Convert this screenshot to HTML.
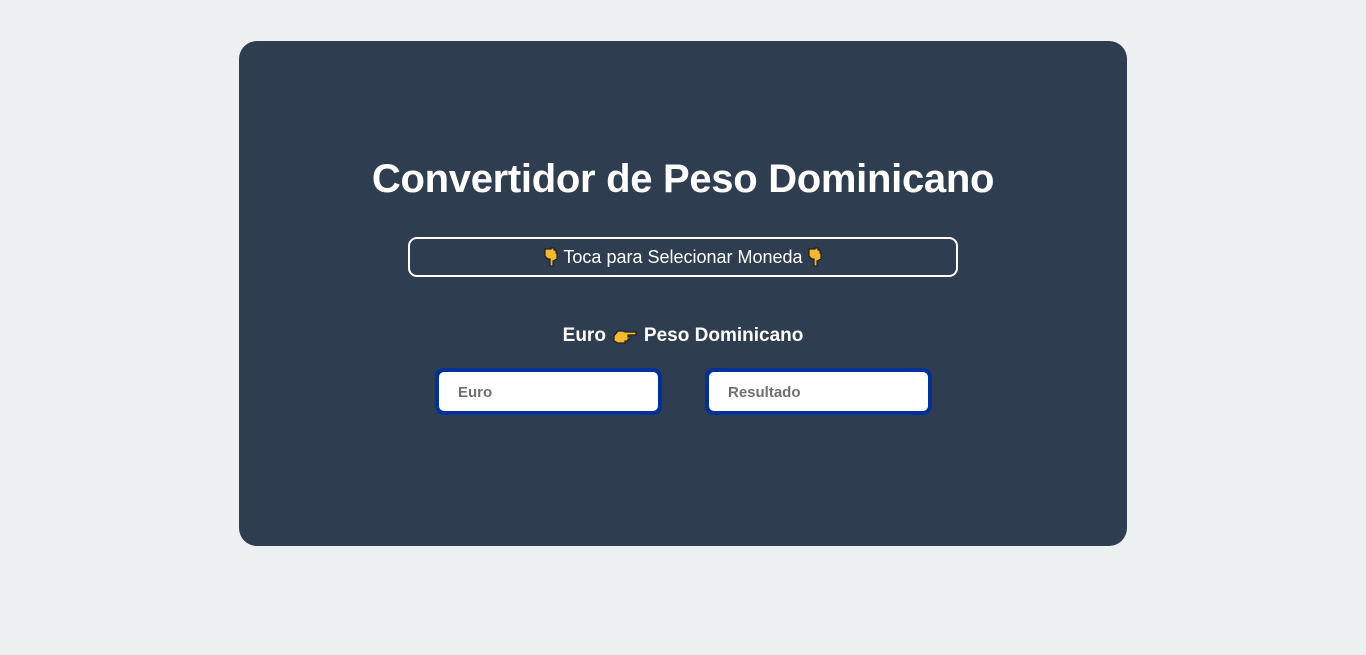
<!DOCTYPE html>
<html><head><meta charset="utf-8">
<style>
html,body{margin:0;padding:0;}
body{width:1366px;height:655px;background:#ecf0f1;font-family:"Liberation Sans",sans-serif;position:relative;overflow:hidden;}
.card{position:absolute;left:239px;top:41px;width:888px;height:505px;background:#2e3d50;border-radius:18px;}
h1{position:absolute;left:0;right:0;top:115px;margin:0;line-height:46px;text-align:center;color:#fff;font-size:40px;font-weight:bold;letter-spacing:-0.3px;}
.btn{position:absolute;left:169px;top:196px;width:546px;height:36px;border:2px solid #fff;border-radius:9px;color:#fff;font-size:18px;display:flex;align-items:center;justify-content:center;gap:5px;}
.lbl{position:absolute;left:0;right:0;top:284px;text-align:center;color:#fff;font-size:19px;font-weight:bold;display:flex;justify-content:center;align-items:center;gap:7px;}
.in{position:absolute;top:327px;width:219px;height:39px;border:4px solid #00309a;border-radius:9px;background:#fff;color:#6f6f6f;font-weight:bold;font-size:15px;line-height:41px;box-sizing:content-box;}
.in span{padding-left:19px;}
</style></head><body>
<div class="card">
<h1>Convertidor de Peso Dominicano</h1>
<div class="btn"><svg width="14" height="20" viewBox="0 0 14 20"><path d="M1 2h6v-1h3v2h2v3h1v6l-4 2v5h-3v-7h-2l-3-3z" fill="#f5b82e" stroke="#222" stroke-width="1.2"/></svg><span>Toca para Selecionar Moneda</span><svg width="14" height="20" viewBox="0 0 14 20"><path d="M1 2h6v-1h3v2h2v3h1v6l-4 2v5h-3v-7h-2l-3-3z" fill="#f5b82e" stroke="#222" stroke-width="1.2"/></svg></div>
<div class="lbl"><span>Euro</span><svg width="24" height="18" viewBox="0 0 24 18"><path d="M1 9l4-5h5l2 1h11v3h-8v2h2v2h-2v2h-3v2h-7l-4-2z" fill="#f5b82e" stroke="#222" stroke-width="1.2"/></svg><span>Peso Dominicano</span></div>
<div class="in" style="left:196px"><span>Euro</span></div>
<div class="in" style="left:466px"><span>Resultado</span></div>
</div>
</body></html>
